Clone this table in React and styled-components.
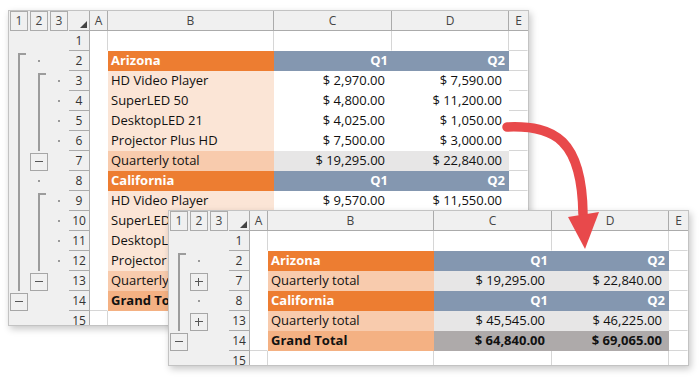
import React from 'react';
import styled, { createGlobalStyle, css } from 'styled-components';

const GlobalStyle = createGlobalStyle`
  html, body { margin: 0; padding: 0; background: #fff; }
  body { font-family: "Open Sans", "Noto Sans", Arial, sans-serif; }
`;

const Stage = styled.div`
  position: relative;
  width: 699px;
  height: 381px;
  overflow: hidden;
  background: #fff;
`;

const Window = styled.div`
  position: absolute;
  left: ${(p) => p.$x}px;
  top: ${(p) => p.$y}px;
  z-index: ${(p) => p.$z};
  width: 521px;
  height: ${(p) => p.$h}px;
  box-sizing: border-box;
  border: 1px solid #c3c3c3;
  background: #fff;
  overflow: hidden;
  box-shadow: 2px 3px 7px rgba(0, 0, 0, 0.22);
`;

const Grid = styled.div`
  display: grid;
  grid-template-columns: 60px 21px 18px 166px 118px 117px 19px;
  grid-auto-rows: 20px;
`;

const LevelBar = styled.div`
  display: flex;
  gap: 2px;
  padding-left: 1px;
  background: #f0f0f0;
`;

const LevelButton = styled.div`
  width: 18px;
  height: 20px;
  box-sizing: border-box;
  border: 1px solid #ababab;
  background: #f0f0f0;
  color: #444;
  font-size: 12px;
  line-height: 18px;
  text-align: center;
`;

const Corner = styled.div`
  position: relative;
  box-sizing: border-box;
  background: #f0f0f0;
  border-right: 1px solid #ababab;
  border-bottom: 1px solid #ababab;
  &::after {
    content: '';
    position: absolute;
    right: 2px;
    bottom: 2px;
    width: 0;
    height: 0;
    border-left: 7px solid transparent;
    border-bottom: 7px solid #444;
  }
`;

const ColHeader = styled.div`
  box-sizing: border-box;
  background: #f0f0f0;
  border-right: ${(p) => (p.$last ? 'none' : '1px solid #ababab')};
  border-bottom: 1px solid #ababab;
  color: #444;
  font-size: 12px;
  line-height: 19px;
  text-align: center;
`;

const OutlineCell = styled.div`
  display: flex;
  background: #f0f0f0;
`;

const lineColor = '#9c9c9c';

const Slot = styled.div`
  position: relative;
  width: 20px;
  height: 20px;
  flex: none;
  ${(p) =>
    p.$kind === 'dot' &&
    css`
      &::after {
        content: '';
        position: absolute;
        left: 9px;
        top: 9px;
        width: 2px;
        height: 2px;
        background: #9a9a9a;
      }
    `}
  ${(p) =>
    p.$kind === 'line' &&
    css`
      &::before {
        content: '';
        position: absolute;
        left: 9px;
        top: 0;
        bottom: 0;
        width: 2px;
        background: ${lineColor};
      }
    `}
  ${(p) =>
    p.$kind === 'start' &&
    css`
      &::before {
        content: '';
        position: absolute;
        left: 9px;
        top: 2px;
        bottom: 0;
        width: 2px;
        background: ${lineColor};
      }
      &::after {
        content: '';
        position: absolute;
        left: 9px;
        top: 2px;
        width: 8px;
        height: 2px;
        background: ${lineColor};
      }
    `}
`;

const ToggleBtn = styled.div`
  position: relative;
  margin: 2px 0 0 1px;
  width: 18px;
  height: 18px;
  box-sizing: border-box;
  border: 1px solid #a6a6a6;
  background: #f0f0f0;
  &::before {
    content: '';
    position: absolute;
    left: 4px;
    top: 7px;
    width: 8px;
    height: 1px;
    background: #555;
  }
  ${(p) =>
    p.$plus &&
    css`
      &::after {
        content: '';
        position: absolute;
        left: 7px;
        top: 4px;
        width: 1px;
        height: 8px;
        background: #555;
      }
    `}
`;

const RowHeader = styled.div`
  box-sizing: border-box;
  background: #f0f0f0;
  border-right: 1px solid #ababab;
  border-bottom: 1px solid #ababab;
  color: #333;
  font-size: 12px;
  line-height: 19px;
  text-align: center;
`;

const gridLine = '#d6d6d6';

const Cell = styled.div`
  box-sizing: border-box;
  background: ${(p) => p.$bg || '#fff'};
  border-right: 1px solid ${(p) => (p.$r ? gridLine : 'transparent')};
  border-bottom: 1px solid ${(p) => (p.$b ? gridLine : 'transparent')};
  color: ${(p) => p.$color || '#111'};
  font-weight: ${(p) => (p.$bold ? 700 : 400)};
  font-size: 13px;
  line-height: 19px;
  text-align: ${(p) => p.$align || 'left'};
  padding: 0 ${(p) => p.$pr ?? 3}px 0 3px;
  white-space: nowrap;
  overflow: hidden;
`;

const Overlay = styled.svg`
  position: absolute;
  left: 0;
  top: 0;
  z-index: 5;
  pointer-events: none;
`;

const S = {
  region: { bg: '#ED7D31', color: '#fff', bold: true },
  q: { bg: '#8497B0', color: '#fff', bold: true, align: 'right', pr: 3 },
  item: { bg: '#FBE5D6' },
  num: { bg: '#fff', align: 'right', pr: 6 },
  white: { bg: '#fff' },
  qt: { bg: '#F8CBAD' },
  qtn: { bg: '#E7E6E6', align: 'right', pr: 6 },
  gt: { bg: '#F4B183', bold: true },
  gtn: { bg: '#AEAAAA', align: 'right', pr: 6, bold: true },
};

const c = (style, text = '') => ({ style, text });
const blank = () => c(null);

const emptyRow = (n, o) => ({ n, o, cells: [blank(), blank(), blank(), blank(), blank()] });
const regionRow = (n, o, name) => ({
  n, o, cells: [c('white'), c('region', name), c('q', 'Q1'), c('q', 'Q2'), blank()],
});
const itemRow = (n, o, name, a, b) => ({
  n, o, cells: [c('white'), c('item', name), c('num', a), c('num', b), blank()],
});
const totalRow = (n, o, a, b) => ({
  n, o, cells: [c('white'), c('qt', 'Quarterly total'), c('qtn', a), c('qtn', b), blank()],
});
const grandRow = (n, o, a, b) => ({
  n, o, cells: [blank(), c('gt', 'Grand Total'), c('gtn', a), c('gtn', b), blank()],
});

const fullRows = [
  emptyRow(1, '   '),
  regionRow(2, 'T. ', 'Arizona'),
  itemRow(3, '|T.', 'HD Video Player', '$ 2,970.00', '$ 7,590.00'),
  itemRow(4, '||.', 'SuperLED 50', '$ 4,800.00', '$ 11,200.00'),
  itemRow(5, '||.', 'DesktopLED 21', '$ 4,025.00', '$ 1,050.00'),
  itemRow(6, '||.', 'Projector Plus HD', '$ 7,500.00', '$ 3,000.00'),
  totalRow(7, '|- ', '$ 19,295.00', '$ 22,840.00'),
  regionRow(8, '|. ', 'California'),
  itemRow(9, '|T.', 'HD Video Player', '$ 9,570.00', '$ 11,550.00'),
  itemRow(10, '||.', 'SuperLED 50', '$ 12,400.00', '$ 14,200.00'),
  itemRow(11, '||.', 'DesktopLED 21', '$ 8,475.00', '$ 6,875.00'),
  itemRow(12, '||.', 'Projector Plus HD', '$ 15,100.00', '$ 13,600.00'),
  totalRow(13, '|- ', '$ 45,545.00', '$ 46,225.00'),
  grandRow(14, '-  ', '$ 64,840.00', '$ 69,065.00'),
  emptyRow(15, '   '),
];

const collapsedRows = [
  emptyRow(1, '   '),
  regionRow(2, 'T. ', 'Arizona'),
  totalRow(7, '|+ ', '$ 19,295.00', '$ 22,840.00'),
  regionRow(8, '|. ', 'California'),
  totalRow(13, '|+ ', '$ 45,545.00', '$ 46,225.00'),
  grandRow(14, '-  ', '$ 64,840.00', '$ 69,065.00'),
  emptyRow(15, '   '),
];

const kindOf = {
  ' ': 'none',
  '.': 'dot',
  '|': 'line',
  T: 'start',
  '-': 'minus',
  '+': 'plus',
};

function Sheet({ rows, x, y, h, z }) {
  const filled = (r, ci) => !!(rows[r] && rows[r].cells[ci].style);
  return (
    <Window $x={x} $y={y} $h={h} $z={z}>
      <Grid>
        <LevelBar>
          {[1, 2, 3].map((n) => (
            <LevelButton key={n}>{n}</LevelButton>
          ))}
        </LevelBar>
        <Corner />
        {['A', 'B', 'C', 'D', 'E'].map((l, i) => (
          <ColHeader key={l} $last={i === 4}>
            {l}
          </ColHeader>
        ))}
        {rows.map((row, ri) => (
          <React.Fragment key={row.n}>
            <OutlineCell>
              {row.o.split('').map((ch, i) => {
                const k = kindOf[ch];
                return (
                  <Slot key={i} $kind={k}>
                    {(k === 'minus' || k === 'plus') && <ToggleBtn $plus={k === 'plus'} />}
                  </Slot>
                );
              })}
            </OutlineCell>
            <RowHeader>{row.n}</RowHeader>
            {row.cells.map((cell, ci) => {
              const st = cell.style ? S[cell.style] : {};
              const open = !cell.style;
              const right = open && ci < 4 && !filled(ri, ci + 1);
              const bottom = open && ri < rows.length - 1 && !filled(ri + 1, ci);
              return (
                <Cell
                  key={ci}
                  $bg={st.bg}
                  $color={st.color}
                  $bold={st.bold}
                  $align={st.align}
                  $pr={st.pr}
                  $r={right}
                  $b={bottom}
                >
                  {cell.text}
                </Cell>
              );
            })}
          </React.Fragment>
        ))}
      </Grid>
    </Window>
  );
}

function Arrow() {
  return (
    <Overlay width="699" height="381" viewBox="0 0 699 381">
      <path
        d="M507 127 C555 125 582 140 583 214"
        stroke="#E8494B"
        strokeWidth="9.5"
        fill="none"
        strokeLinecap="round"
      />
      <polygon points="568,217 599,212 585,249" fill="#E8494B" />
    </Overlay>
  );
}

export default function App() {
  return (
    <>
      <GlobalStyle />
      <Stage>
        <Sheet rows={fullRows} x={8} y={10} h={316} z={1} />
        <Sheet rows={collapsedRows} x={168} y={210} h={156} z={2} />
        <Arrow />
      </Stage>
    </>
  );
}
